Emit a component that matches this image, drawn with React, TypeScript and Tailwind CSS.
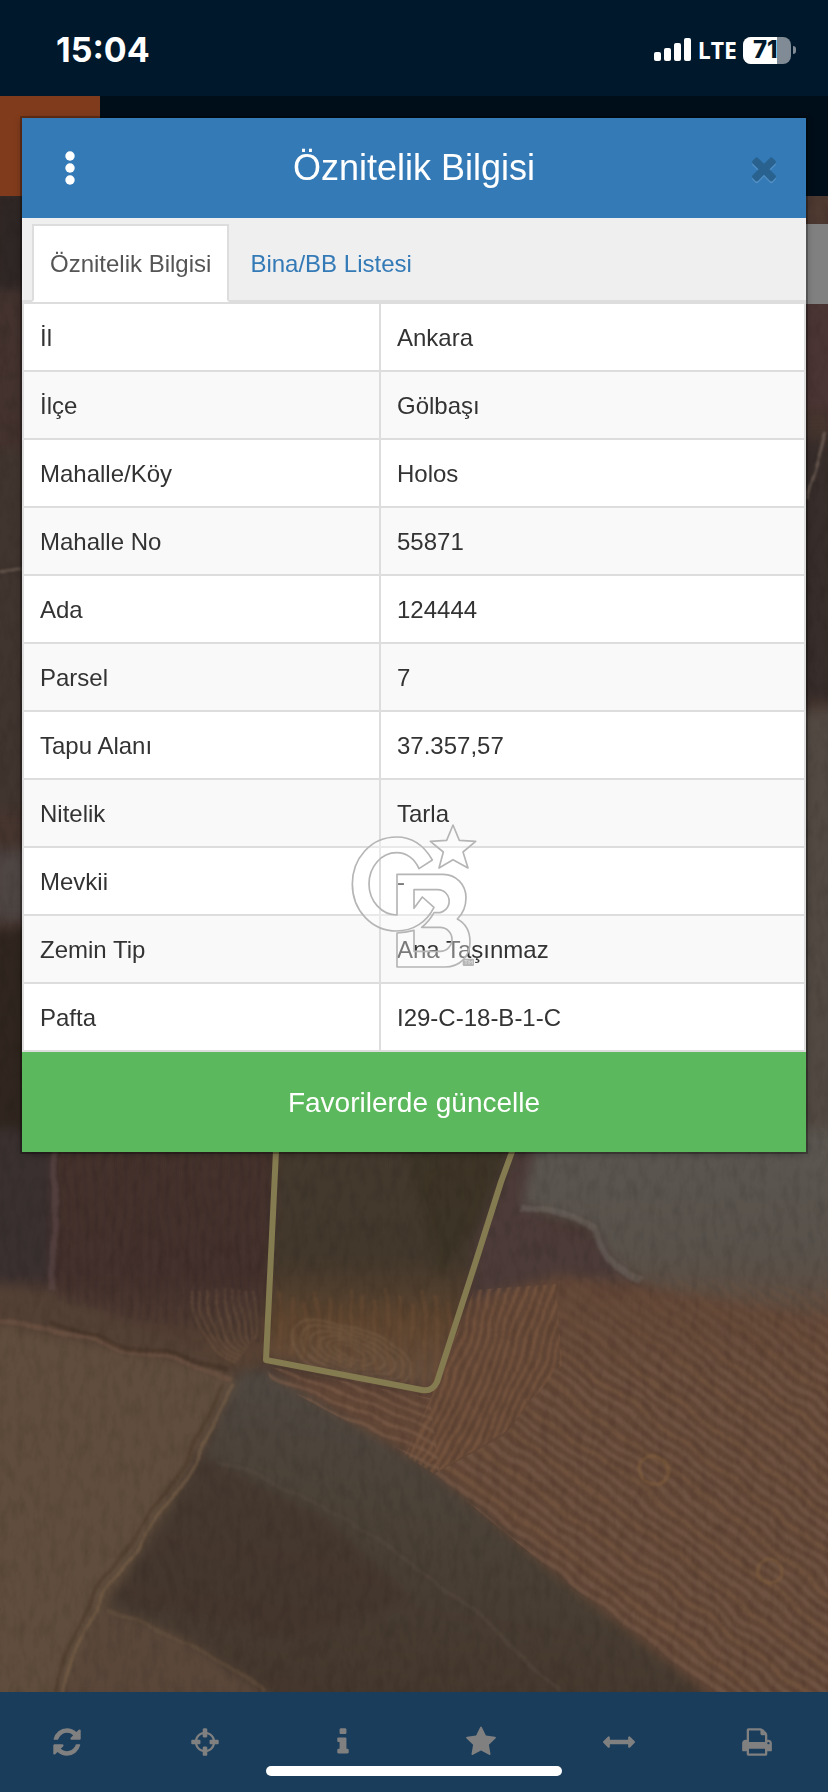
import React, { useState } from 'react';

interface IconProps {
  path: string;
  className?: string;
}

const Icon: React.FC<IconProps> = ({ path, className }) => (
  <svg viewBox="0 0 1792 1792" fill="currentColor" className={className} aria-hidden="true">
    <path d={path} />
  </svg>
);

const ICONS = {
  refresh:
    'M1639 1056q0 5-1 7-64 268-268 434.5t-478 166.5q-146 0-282.5-55t-243.5-157l-129 129q-19 19-45 19t-45-19-19-45v-448q0-26 19-45t45-19h448q26 0 45 19t19 45-19 45l-137 137q71 66 161 102t187 36q134 0 250-65t186-179q11-17 53-117 8-23 30-23h192q13 0 22.5 9.5t9.5 22.5zm25-800v448q0 26-19 45t-45 19h-448q-26 0-45-19t-19-45 19-45l138-138q-148-137-349-137-134 0-250 65t-186 179q-11 17-53 117-8 23-30 23h-199q-13 0-22.5-9.5t-9.5-22.5v-7q65-268 270-434.5t480-166.5q146 0 284 55.5t245 156.5l130-129q19-19 45-19t45 19 19 45z',
  crosshairs:
    'M1325 1024h-109q-26 0-45-19t-19-45v-128q0-26 19-45t45-19h109q-32-108-112.5-188.5t-188.5-112.5v109q0 26-19 45t-45 19h-128q-26 0-45-19t-19-45v-109q-108 32-188.5 112.5t-112.5 188.5h109q26 0 45 19t19 45v128q0 26-19 45t-45 19h-109q32 108 112.5 188.5t188.5 112.5v-109q0-26 19-45t45-19h128q26 0 45 19t19 45v109q108-32 188.5-112.5t112.5-188.5zm339-192v128q0 26-19 45t-45 19h-143q-37 161-154.5 278.5t-278.5 154.5v143q0 26-19 45t-45 19h-128q-26 0-45-19t-19-45v-143q-161-37-278.5-154.5t-154.5-278.5h-143q-26 0-45-19t-19-45v-128q0-26 19-45t45-19h143q37-161 154.5-278.5t278.5-154.5v-143q0-26 19-45t45-19h128q26 0 45 19t19 45v143q161 37 278.5 154.5t154.5 278.5h143q26 0 45 19t19 45z',
  info:
    'M1216 1344v128q0 26-19 45t-45 19h-512q-26 0-45-19t-19-45v-128q0-26 19-45t45-19h64v-384h-64q-26 0-45-19t-19-45v-128q0-26 19-45t45-19h384q26 0 45 19t19 45v576h64q26 0 45 19t19 45zm-128-1152v192q0 26-19 45t-45 19h-256q-26 0-45-19t-19-45v-192q0-26 19-45t45-19h256q26 0 45 19t19 45z',
  star:
    'M1728 647q0 22-26 48l-363 354 86 500q1 7 1 20 0 21-10.5 35.5t-30.5 14.5q-19 0-40-12l-449-236-449 236q-22 12-40 12-21 0-31.5-14.5t-10.5-35.5q0-6 2-20l86-500-364-354q-25-27-25-48 0-37 56-46l502-73 225-455q19-41 49-41t49 41l225 455 502 73q56 9 56 46z',
  arrows:
    'M1792 896q0 26-19 45l-256 256q-19 19-45 19t-45-19-19-45v-128h-1024v128q0 26-19 45t-45 19-45-19l-256-256q-19-19-19-45t19-45l256-256q19-19 45-19t45 19 19 45v128h1024v-128q0-26 19-45t45-19 45 19l256 256q19 19 19 45z',
  print:
    'M448 1536h896v-256h-896v256zm0-640h896v-384h-160q-40 0-68-28t-28-68v-160h-640v640zm1152 64q0-26-19-45t-45-19-45 19-19 45 19 45 45 19 45-19 19-45zm128 0v416q0 13-9.5 22.5t-22.5 9.5h-224v160q0 40-28 68t-68 28h-960q-40 0-68-28t-28-68v-160h-224q-13 0-22.5-9.5t-9.5-22.5v-416q0-79 56.5-135.5t135.5-56.5h64v-544q0-40 28-68t68-28h672q40 0 88 20t76 48l152 152q28 28 48 76t20 88v256h64q79 0 135.5 56.5t56.5 135.5z',
  times:
    'M1490 1322q0 40-28 68l-136 136q-28 28-68 28t-68-28l-294-294-294 294q-28 28-68 28t-68-28l-136-136q-28-28-28-68t28-68l294-294-294-294q-28-28-28-68t28-68l136-136q28-28 68-28t68 28l294 294 294-294q28-28 68-28t68 28l136 136q28 28 28 68t-28 68l-294 294 294 294q28 28 28 68z',
};

const rows = [
  ['İl', 'Ankara'],
  ['İlçe', 'Gölbaşı'],
  ['Mahalle/Köy', 'Holos'],
  ['Mahalle No', '55871'],
  ['Ada', '124444'],
  ['Parsel', '7'],
  ['Tapu Alanı', '37.357,57'],
  ['Nitelik', 'Tarla'],
  ['Mevkii', '-'],
  ['Zemin Tip', 'Ana Taşınmaz'],
  ['Pafta', 'I29-C-18-B-1-C'],
];

const tools = [
  { label: 'Yenile', path: ICONS.refresh },
  { label: 'Konum', path: ICONS.crosshairs },
  { label: 'Bilgi', path: ICONS.info },
  { label: 'Favoriler', path: ICONS.star },
  { label: 'Ölçüm', path: ICONS.arrows },
  { label: 'Yazdır', path: ICONS.print },
];

const range = (n: number) => Array.from({ length: n }, (_, i) => i);

const StatusBar = () => (
  <div className="flex h-24 items-center justify-between bg-[#00182b] pr-8 pl-14 font-['Inter',sans-serif] text-white">
    <span className="pt-1 text-[34px] leading-10 font-bold">15:04</span>
    <div className="flex items-center gap-1.5 pt-1">
      <svg viewBox="0 0 38 24" className="h-6 w-[38px]" fill="white">
        <rect x="0" y="14" width="7" height="9" rx="2" />
        <rect x="10" y="10" width="7" height="13" rx="2" />
        <rect x="20" y="5" width="7" height="18" rx="2" />
        <rect x="30" y="0" width="7" height="23" rx="2" />
      </svg>
      <span className="font-['Open_Sans',sans-serif] text-[23px] leading-7 font-bold">LTE</span>
      <div className="flex items-center gap-0.5">
        <div className="relative flex h-[27px] w-12 items-center overflow-hidden rounded-lg bg-[#808b95] pl-2.5">
          <div className="absolute inset-y-0 left-0 w-[71%] bg-white" />
          <span className="relative text-2xl leading-6 font-extrabold text-[#00182b]">71</span>
        </div>
        <div className="h-2 w-[3px] rounded-r-full bg-[#808b95]" />
      </div>
    </div>
  </div>
);

// Dimmed satellite view with the selected parcel outlined
const SatelliteMap = () => (
  <svg
    viewBox="0 196 828 1496"
    preserveAspectRatio="xMidYMax slice"
    className="absolute inset-0 h-full w-full"
    aria-hidden="true"
  >
    <defs>
      <filter id="soft" x="-10%" y="-10%" width="120%" height="120%" colorInterpolationFilters="sRGB">
        <feGaussianBlur stdDeviation="6" />
      </filter>
      <filter id="fine" colorInterpolationFilters="sRGB">
        <feTurbulence type="fractalNoise" baseFrequency="0.02" numOctaves="2" seed="4" />
        <feDisplacementMap in="SourceGraphic" scale="12" xChannelSelector="R" yChannelSelector="G" />
        <feGaussianBlur stdDeviation="1" />
      </filter>
      <filter id="grain" x="0" y="0" width="100%" height="100%" colorInterpolationFilters="sRGB">
        <feTurbulence type="fractalNoise" baseFrequency="0.12 0.05" numOctaves="4" seed="8" />
        <feColorMatrix values="0 0 0 0 0  0 0 0 0 0  0 0 0 0 0  1.2 0 0 0 -0.5" />
      </filter>
      <linearGradient id="parcel" x1="0" y1="0" x2="0" y2="1">
        <stop offset="0" stopColor="#443a2e" />
        <stop offset="0.5" stopColor="#43382c" />
        <stop offset="0.75" stopColor="#5e452f" />
        <stop offset="1" stopColor="#67503f" />
      </linearGradient>
      <linearGradient id="maroon" x1="0" y1="0" x2="0" y2="1">
        <stop offset="0" stopColor="#46332d" />
        <stop offset="0.6" stopColor="#45312d" />
        <stop offset="1" stopColor="#5a4535" />
      </linearGradient>
      <linearGradient id="rocky" x1="0" y1="1152" x2="0" y2="1320" gradientUnits="userSpaceOnUse">
        <stop offset="0" stopColor="#5b5650" />
        <stop offset="0.6" stopColor="#59524b" />
        <stop offset="1" stopColor="#604b3d" />
      </linearGradient>
      <linearGradient id="valley" x1="0.6" y1="0" x2="0.3" y2="1">
        <stop offset="0" stopColor="#504a44" />
        <stop offset="0.5" stopColor="#4a4035" />
        <stop offset="1" stopColor="#44362c" />
      </linearGradient>
      <linearGradient id="fade" x1="0" y1="1260" x2="0" y2="1380" gradientUnits="userSpaceOnUse">
        <stop offset="0" stopColor="#000" />
        <stop offset="1" stopColor="#fff" />
      </linearGradient>
      <mask id="fadeTop" maskUnits="userSpaceOnUse" x="0" y="1200" width="828" height="500">
        <rect y="1200" width="828" height="500" fill="url(#fade)" />
      </mask>
      <clipPath id="rightField">
        <path d="M556 1282L640 1270L828 1290V1692H711L554 1573L434 1474L505 1435L560 1360Z" />
      </clipPath>
      <clipPath id="rightBand">
        <path d="M474 1290L556 1284L562 1365L505 1432L434 1474L405 1455L430 1400Z" />
      </clipPath>
      <clipPath id="bottomBand">
        <path d="M266 1366L430 1398L440 1474L400 1450L270 1380Z" />
      </clipPath>
    </defs>

    <rect y="196" width="828" height="1496" fill="#46352f" />
    <g filter="url(#soft)">
      <rect x="-10" y="190" width="60" height="100" fill="#2f2725" />
      <rect x="-10" y="290" width="60" height="160" fill="#43322e" />
      <rect x="-10" y="450" width="60" height="360" fill="#41352f" />
      <rect x="-10" y="850" width="60" height="70" fill="#4e4643" />
      <rect x="-10" y="930" width="60" height="200" fill="#30261f" />
      <rect x="790" y="190" width="50" height="34" fill="#4f3a31" />
      <rect x="790" y="300" width="50" height="110" fill="#4b3534" />
      <rect x="790" y="440" width="50" height="260" fill="#372d2a" />
      <rect x="790" y="710" width="50" height="500" fill="#524942" />
      <rect x="-10" y="1130" width="64" height="150" fill="#3a3030" />
      <path d="M52 1130H278L262 1372L50 1330Z" fill="url(#maroon)" />
      <path d="M278 1130H520L434 1388L264 1360Z" fill="url(#parcel)" />
      <path d="M400 1130H512L495 1200L440 1280Z" fill="#363020" opacity="0.5" />
      <path d="M520 1130H545L522 1205L600 1240L640 1290L470 1300L475 1240Z" fill="#4c3b38" />
      <path d="M540 1130H840V1330L700 1305L620 1272L592 1226L522 1205Z" fill="url(#rocky)" />
      <path d="M470 1300L560 1275L640 1285L840 1320V1700H700L554 1573L434 1472L262 1370L430 1392Z" fill="#624636" />
      <path d="M-10 1285L50 1290L240 1370L236 1384L-10 1325Z" fill="#544135" />
      <path d="M-10 1322L238 1376L200 1450L60 1700H-10Z" fill="#604d3d" />
      <path d="M238 1374L262 1368L434 1472L554 1573L715 1700H55L105 1605L205 1450Z" fill="url(#valley)" />
      <path d="M205 1455L330 1520L410 1600L300 1640L110 1600Z" fill="#42342b" opacity="0.6" />
      <path d="M105 1608L180 1635L275 1700H55Z" fill="#5a473a" />
    </g>

    {/* furrows */}
    <g clipPath="url(#rightField)" mask="url(#fadeTop)">
      <g filter="url(#fine)">
        {range(80).map(i => (
          <path
            key={i}
            d={`M400 ${810 + i * 13}Q620 ${960 + i * 13} 860 ${1150 + i * 13}`}
            stroke={i % 3 ? '#735645' : '#735540'}
            strokeWidth="5"
            fill="none"
            opacity="0.8"
          />
        ))}
      </g>
    </g>
    <g clipPath="url(#rightBand)">
      <g filter="url(#fine)">
        {range(26).map(i => (
          <path
            key={i}
            d={`M${430 + i * 9} 1270Q${420 + i * 8} 1380 ${350 + i * 8} 1490`}
            stroke="#7a5740"
            strokeWidth="3"
            fill="none"
            opacity="0.8"
          />
        ))}
      </g>
    </g>
    <g clipPath="url(#bottomBand)">
      <g filter="url(#fine)">
        {range(14).map(i => (
          <path key={i} d={`M250 ${1310 + i * 11}L460 ${1400 + i * 11}`} stroke="#7d5d49" strokeWidth="3" opacity="0.7" />
        ))}
      </g>
    </g>
    <g filter="url(#fine)" fill="none">
      {range(15).map(i => (
        <path key={i} d={`M${280 + i * 12} ${1290 + (i % 3) * 6}V${1350 + i * 3}`} stroke="#7a5738" strokeWidth="3" opacity="0.35" />
      ))}
      {range(6).map(i => (
        <ellipse key={i} cx={350} cy={1352} rx={62 - i * 9} ry={26 - i * 4} stroke="#84694f" strokeWidth="2" opacity="0.4" transform="rotate(18 350 1352)" />
      ))}
      {range(24).map(i => (
        <path key={i} d={`M${60 + i * 9} 1150V${1300 + i * 2}`} stroke="#352727" strokeWidth="3" opacity="0.25" />
      ))}
      {range(9).map(i => (
        <path key={i} d={`M${190 + i * 8} 1290Q${196 + i * 8} 1345 ${238 + i * 2} ${1362 - i * 3}`} stroke="#7d5f46" strokeWidth="2" opacity="0.45" />
      ))}
      <path d="M57 1140L52 1290" stroke="#5f4c4c" strokeWidth="7" opacity="0.5" />
      <path d="M0 1322Q90 1335 235 1378" stroke="#6d5343" strokeWidth="5" opacity="0.7" />
      <path d="M50 1322Q110 1345 230 1368" stroke="#402e22" strokeWidth="5" opacity="0.5" />
      <path d="M236 1382Q200 1460 135 1550Q85 1610 62 1692" stroke="#776047" strokeWidth="3" opacity="0.7" />
      <path d="M226 1382Q190 1460 128 1545Q78 1605 55 1692" stroke="#4d3a2a" strokeWidth="4" opacity="0.6" />
      <path d="M215 1460Q330 1500 420 1570T560 1692" stroke="#564a3f" strokeWidth="4" opacity="0.5" />
      <path d="M105 1610Q190 1635 265 1692" stroke="#68543f" strokeWidth="4" opacity="0.5" />
      <path d="M522 1207Q560 1212 592 1228Q605 1262 640 1282" stroke="#746c66" strokeWidth="7" opacity="0.45" />
      <circle cx="652" cy="1472" r="15" stroke="#86633e" strokeWidth="3" opacity="0.6" />
      <circle cx="770" cy="1572" r="13" stroke="#86633e" strokeWidth="3" opacity="0.5" />
      <path d="M0 572L22 568M808 500L828 432" stroke="#66574f" strokeWidth="3" />
    </g>
    <rect y="196" width="828" height="1496" filter="url(#grain)" opacity="0.16" />

    <path
      d="M277 1130L266 1360L422 1390Q432 1392 437 1382L475 1264L501 1182L520 1130"
      fill="none"
      stroke="#857b50"
      strokeWidth="6"
      strokeLinejoin="round"
    />
  </svg>
);

const Watermark = () => (
  <div className="pointer-events-none absolute inset-0 flex items-center justify-center">
    <svg viewBox="57 92 390 450" className="h-[150px] w-[130px]" fill="white" fillOpacity="0.35" stroke="#b5b5b5" strokeWidth="5" strokeLinejoin="round">
      <path d="M369 104L388 150L437 153L399 185L414 233L369 208L327 233L340 185L301 153L350 150Z" />
      <path d="M307 209C282 165 245 140 200 140C122 140 67 205 67 281C67 360 125 422 200 422C250 422 290 395 312 351L277 320L252 354V298H323A34 34 0 0 1 323 367H312Q298 393 275 411H330A36 36 0 0 1 330 483H252V420Q226 427 201 428V530H345C388 530 420 500 420 455C420 425 408 400 382 386C398 370 408 350 408 322C408 283 378 252 340 252H201V374C155 374 117 332 117 281C117 230 153 187 200 187C229 187 254 205 267 235Z" />
      <rect x="398" y="505" width="34" height="22" rx="4" fill="#b5b5b5" fillOpacity="1" stroke="none" />
      <path d="M403 511H413M408 511V522M417 522V511L422 517L427 511V522" fill="none" stroke="#e6e6e6" strokeWidth="2" />
    </svg>
  </div>
);

const AttributeDialog = () => {
  const [tab, setTab] = useState<'info' | 'list'>('info');
  const active = 'border-[#ddd] border-b-white bg-white text-[#555]';
  const passive = 'border-transparent text-[#337ab7]';

  return (
    <div role="dialog" aria-labelledby="dialog-title" className="bg-white shadow-[0_0_0_2px_rgba(0,0,0,0.25),0_2px_8px_rgba(0,0,0,0.3)]">
      <div className="flex h-[100px] items-center justify-between bg-[#337ab7] px-6 text-white">
        <button aria-label="Menü" className="flex h-12 w-12 items-center justify-center">
          <svg viewBox="0 0 10 34" className="h-[34px] w-2.5" fill="currentColor">
            <circle cx="5" cy="5" r="4.7" />
            <circle cx="5" cy="17" r="4.7" />
            <circle cx="5" cy="29" r="4.7" />
          </svg>
        </button>
        <h1 id="dialog-title" className="text-4xl leading-10">Öznitelik Bilgisi</h1>
        <button aria-label="Kapat" className="flex h-12 w-12 items-center justify-end">
          <Icon path={ICONS.times} className="h-9 w-9 shrink-0 text-[#29628f] drop-shadow-[0_2px_0_#4f8dc2]" />
        </button>
      </div>

      <div role="tablist" className="flex gap-[3px] border-b-2 border-[#ddd] bg-[#efefef] px-2.5 pt-1.5">
        <button
          role="tab"
          aria-selected={tab === 'info'}
          onClick={() => setTab('info')}
          className={`-mb-0.5 h-[78px] border-2 px-4 pt-0.5 text-2xl ${tab === 'info' ? active : passive}`}
        >
          Öznitelik Bilgisi
        </button>
        <button
          role="tab"
          aria-selected={tab === 'list'}
          onClick={() => setTab('list')}
          className={`-mb-0.5 h-[78px] border-2 px-4 pt-0.5 text-2xl ${tab === 'list' ? active : passive}`}
        >
          Bina/BB Listesi
        </button>
      </div>

      <table className="w-full border-collapse text-2xl text-[#333]">
        <tbody>
          {rows.map(([name, value]) => (
            <tr key={name} className="h-[68px] odd:bg-white even:bg-[#f9f9f9]">
              <th scope="row" className="w-[357px] border-2 border-[#ddd] px-4 pt-0.5 text-left font-normal">{name}</th>
              <td className="border-2 border-[#ddd] px-4 pt-0.5">{value}</td>
            </tr>
          ))}
        </tbody>
      </table>

      <button className="h-[100px] w-full bg-[#5cb85c] pt-0.5 text-[28px] text-white">Favorilerde güncelle</button>
    </div>
  );
};

export default function App() {
  return (
    <div className="relative flex min-h-screen flex-col bg-black font-['Liberation_Sans',Arial,sans-serif]">
      <StatusBar />
      <header className="flex h-[100px] bg-[#000e19]">
        <div className="w-[100px] bg-[#803b1c]" />
      </header>
      <main className="relative flex-1 overflow-hidden">
        <SatelliteMap />
        <div className="absolute top-7 right-0 h-20 w-24 bg-[#808080]" />
      </main>
      <nav className="relative grid h-[100px] grid-cols-6 bg-[#1a3d5c] text-[#808080]">
        {tools.map(tool => (
          <button key={tool.label} aria-label={tool.label} className="flex items-center justify-center pr-1">
            <Icon path={tool.path} className="h-8 w-8" />
          </button>
        ))}
        <div className="absolute bottom-4 left-1/2 h-2.5 w-[296px] -translate-x-1/2 rounded-full bg-white" />
      </nav>
      <div className="absolute inset-x-0 top-0 px-[22px] pt-[118px]">
        <AttributeDialog />
      </div>
      <Watermark />
    </div>
  );
}
